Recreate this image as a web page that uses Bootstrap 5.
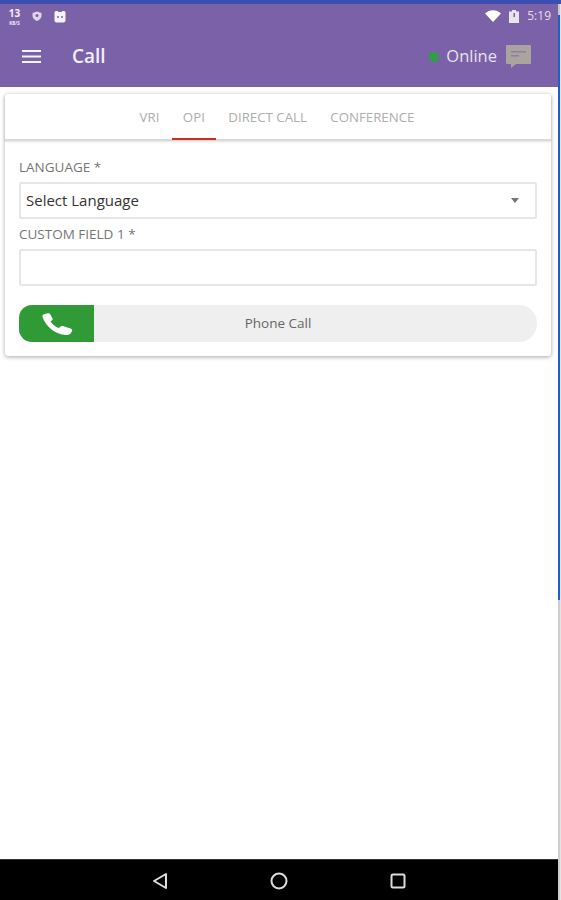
<!DOCTYPE html>
<html lang="en">
<head>
    <meta charset="UTF-8">
    <meta name="viewport" content="width=device-width, initial-scale=1.0">
    <title>Call</title>
    <link href="https://cdn.jsdelivr.net/npm/bootstrap@5.3.0/dist/css/bootstrap.min.css" rel="stylesheet">
    <style>
        html, body { height: 900px; overflow: hidden; }
        body { font-family: "Open Sans", "Liberation Sans", sans-serif; background: #fff; }
        .top-strip { height: 4px; background: #3c4fb0; }
        .app-frame { height: 896px; }
        .side-strip { width: 3px; border-right: 1px solid #e4e4e4; }
        .side-strip-head { height: 11px; background: #c8c8c8; }
        .side-strip-top { height: 585px; background: #1f5fc8; }
        .side-strip-low { flex: 1; background: #cfcfcf; }
        .app-head { height: 83px; background: #7b62a8; color: #fff; }
        .status-row { height: 24px; padding: 0 7px 0 6px; color: #e3dfe9; font-size: 12px; }
        .status-left { gap: 9px; }
        .speed-text { width: 17px; text-align: center; font-weight: 700; color: #f1edf6; }
        .speed-num { display: block; font-size: 10px; line-height: 14px; }
        .speed-unit { display: block; font-size: 4.500px; line-height: 6px; }
        .title-row { height: 59px; padding: 0 27px 2px 22px; }
        .title-text { font-size: 19px; font-weight: 600; margin-left: 31px; color: #f1edf6; }
        .online-dot { width: 10px; height: 10px; border-radius: 50%; background: #2f9e44; margin-right: 7px; }
        .online-text { font-size: 16.500px; color: #e6e0ee; margin-right: 9px; }
        .call-card { margin: 7px 7px 0 5px; height: 262px; border-radius: 3px; border: 0; box-shadow: 0 1px 4px rgba(0,0,0,.35); }
        .tab-strip { height: 47px; gap: 23.500px; padding-right: 2px; border-bottom: 2px solid #d9d9d9; box-shadow: 0 1px 2px rgba(0,0,0,.12); }
        .tab-item { font-size: 13.250px; color: #adadad; height: 45px; line-height: 47px; position: relative; }
        .tab-on::after { content: ""; position: absolute; left: -11px; right: -11px; bottom: -1px; height: 2px; background: #c8301e; }
        .field-zone { padding: 15px 14px 0; }
        .field-label { font-size: 13.500px; line-height: 22px; color: #757575; height: 26px; }
        .field-box { height: 37px; border: 2px solid #e6e6e6; border-radius: 2px; font-size: 15px; color: #333; padding: 0 5px; background: #fff; }
        .field-gap { margin-bottom: 4px; }
        .caret-mark { width: 0; height: 0; border-left: 4.500px solid transparent; border-right: 4.500px solid transparent; border-top: 5px solid #757575; margin-right: 11px; }
        .call-slider { height: 37px; margin-top: 19px; background: #efefef; border-radius: 13px 18px 18px 13px; overflow: hidden; }
        .call-knob { width: 75px; background: #2f9a36; }
        .call-label { font-size: 13.500px; color: #666; padding-right: 75px; }
        .nav-bottom { height: 41px; background: #000; margin-top: auto; gap: 102px; padding-top: 2px; padding-right: 1px; border-top: 1px solid #333; }
    </style>
</head>
<body>
    <div class="top-strip"></div>
    <div class="app-frame d-flex">
        <div class="flex-grow-1 d-flex flex-column">
            <!-- шапка -->
            <div class="app-head">
                <div class="status-row d-flex align-items-center justify-content-between">
                    <div class="status-left d-flex align-items-center">
                        <div class="speed-text"><span class="speed-num">13</span><span class="speed-unit">KB/S</span></div>
                        <svg width="10" height="10" viewBox="0 0 10 10"><path d="M5 .5 9.500 2v3C9.500 7.500 7 9 5 10 3 9 .5 7.500.5 5V2z" fill="#ddd6e8"/><circle cx="5" cy="4.500" r="1.500" fill="#7b62a8"/></svg>
                        <svg width="12" height="13" viewBox="0 0 12 13" style="margin-left:3px"><path d="M2 1h1.500l1 1h3l1-1H10a1.500 1.500 0 0 1 1.500 1.500v8A2 2 0 0 1 9.500 12.500h-7A2 2 0 0 1 .5 10.500v-8A1.500 1.500 0 0 1 2 1z" fill="#f4f1f8"/><circle cx="4" cy="7" r="1" fill="#7b62a8"/><circle cx="8" cy="7" r="1" fill="#7b62a8"/></svg>
                    </div>
                    <div class="d-flex align-items-center">
                        <svg width="16" height="12" viewBox="0 0 16 12"><path d="M0 3.500C4.500-1 11.500-1 16 3.500L8 12z" fill="#fff"/></svg>
                        <svg class="ms-2" width="10" height="13" viewBox="0 0 10 13"><path d="M3 0h4v1.500h3V13H0V1.500h3z" fill="#e8e4ef"/><path d="M4.500 3H6v4H4.500z" fill="#7b62a8"/></svg>
                        <span class="ms-2">5:19</span>
                    </div>
                </div>
                <div class="title-row d-flex align-items-center">
                    <svg width="19" height="13" viewBox="0 0 19 13"><path d="M0 0h19v2H0zM0 5.500h19v2H0zM0 11h19v2H0z" fill="#f4f1f8"/></svg>
                    <span class="title-text">Call</span>
                    <span class="online-dot ms-auto"></span>
                    <span class="online-text">Online</span>
                    <svg width="25" height="23" viewBox="0 0 25 23"><path d="M1 0h23a1 1 0 0 1 1 1v17a1 1 0 0 1-1 1H10l-5 4v-4H1a1 1 0 0 1-1-1V1a1 1 0 0 1 1-1z" fill="#aaa39f"/><path d="M5 6h15v1.500H5zM5 10h8v1.500H5z" fill="#8d80a8"/></svg>
                </div>
            </div>

            <!-- карточка звонка -->
            <div class="card call-card">
                <div class="tab-strip d-flex justify-content-center">
                    <div class="tab-item">VRI</div>
                    <div class="tab-item tab-on">OPI</div>
                    <div class="tab-item">DIRECT CALL</div>
                    <div class="tab-item">CONFERENCE</div>
                </div>
                <div class="field-zone">
                    <div class="field-label">LANGUAGE *</div>
                    <div class="field-box field-gap d-flex align-items-center justify-content-between">
                        <span>Select Language</span>
                        <span class="caret-mark"></span>
                    </div>
                    <div class="field-label">CUSTOM FIELD 1 *</div>
                    <div class="field-box"></div>
                    <div class="call-slider d-flex">
                        <div class="call-knob d-flex align-items-center justify-content-center">
                            <svg width="32" height="22" viewBox="0 0 32 22"><path d="M1.500 4C1 2.500 2 1.500 3.500 1L7 .3C8 .2 8.800.7 9.300 1.500L11.500 5.500C12 6.500 11.500 7.200 10.500 7.800L9.500 8.500C11.500 11.500 14.500 13.800 18 15L19.200 13.800C20 13 21 12.800 22 13.100L29.500 15.500C31 16 31.500 17 31 18.300L29.500 20.500C28.500 21.700 27 22 25 22 14 21.500 4.500 13 1.500 4z" fill="#fff"/></svg>
                        </div>
                        <div class="call-label flex-grow-1 d-flex align-items-center justify-content-center">Phone Call</div>
                    </div>
                </div>
            </div>

            <!-- навигация android -->
            <div class="nav-bottom d-flex align-items-center justify-content-center">
                <svg width="16" height="18" viewBox="0 0 16 18"><path d="M14 2v14L2 9z" fill="none" stroke="#ddd" stroke-width="2" stroke-linejoin="round"/></svg>
                <svg width="18" height="18" viewBox="0 0 18 18"><circle cx="9" cy="9" r="7.500" fill="none" stroke="#ddd" stroke-width="2"/></svg>
                <svg width="16" height="16" viewBox="0 0 16 16"><rect x="1.500" y="1.500" width="13" height="13" rx="1.500" fill="none" stroke="#ddd" stroke-width="2"/></svg>
            </div>
        </div>
        <div class="side-strip d-flex flex-column">
            <div class="side-strip-head"></div>
            <div class="side-strip-top"></div>
            <div class="side-strip-low"></div>
        </div>
    </div>
    <script src="https://cdn.jsdelivr.net/npm/bootstrap@5.3.0/dist/js/bootstrap.bundle.min.js"></script>
</body>
</html>
